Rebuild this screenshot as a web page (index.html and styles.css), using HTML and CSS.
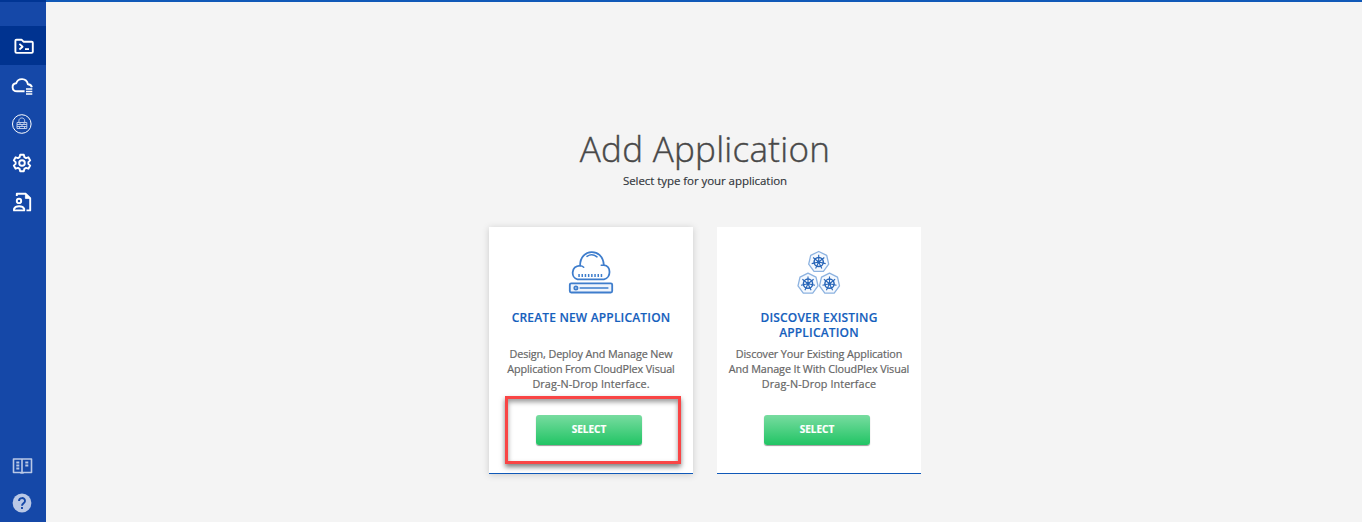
FILE: index.html
```html
<!DOCTYPE html>
<html lang="en">
<head>
<meta charset="utf-8">
<title>Add Application</title>
<link rel="stylesheet" href="styles.css">
</head>
<body>
<div class="app">
  <nav class="sidebar">
    <a class="nav-item active"><svg viewBox="0 26 46 39"><path d="M16.5 39.7h5l2 2h8.2q1.1 0 1.1 1.1v9q0 1.1-1.1 1.1H16.6q-1.2 0-1.2-1.1V40.8q0-1.1 1.1-1.1z"/><path d="M19.4 43.9l3.2 2.8-3.2 2.8M25 49.2h4" stroke-width="1.8"/></svg></a>
    <a class="nav-item"><svg viewBox="0 65 46 39"><path d="M24.6 91.3H17c-5.6 0-5.8-7.6-.8-8 1.8-5.6 10.3-5.7 11.7.9 2 .1 3.6 1.2 4 3"/><path d="M26 89h6.3M26 91.5h6.3M26 94h6.3" stroke-width="1.7"/></svg></a>
    <a class="nav-item"><svg viewBox="0 104 46 39"><circle cx="21.8" cy="124" r="9.3" stroke-width="1"/><g stroke="#c9d6ee"><path d="M18.9 122v-1.2c0-3.8 5.8-3.8 5.8 0v1.2M17 122.5h9.8v6H17zM17 124.5h9.8M17 126.5h9.8M20 122.5v2M24 122.5v2M22 124.5v2M19.6 126.5v2M24.5 126.5v2" stroke-width=".9"/></g></svg></a>
    <a class="nav-item"><svg viewBox="0 143 46 39"><path d="M20.2 154.7h3.6l.6 2.5 1.6.9 2.4-.8 1.8 3.1-1.8 1.7v1.8l1.8 1.7-1.8 3.1-2.4-.8-1.6.9-.6 2.5h-3.6l-.6-2.5-1.6-.9-2.4.8-1.8-3.1 1.8-1.7v-1.8l-1.8-1.7 1.8-3.1 2.4.8 1.6-.9z"/><circle cx="22" cy="163" r="2.8"/></svg></a>
    <a class="nav-item"><svg viewBox="0 182 46 39"><path d="M16.8 196v-2.2h9l4.4 4.4v12.2h-3.7"/><path d="M25.4 193.5v4.9h5z" fill="#fff" stroke-width=".8"/><circle cx="19" cy="200.9" r="2.2"/><path d="M14 210.4v-1.6c1.6-3.3 8.6-3.3 10.2 0v1.6z"/></svg></a>
    <a class="nav-item faded low"><svg viewBox="0 446 46 39"><path d="M13.5 459h8.5v13.5h-8.5zM22 459h9.5v13.5H22zM20.3 473h3.4" stroke-width="1.6"/><path d="M16.3 462.5h3M16.3 465.5h3M16.3 468.5h3M25.3 462.5h3M25.3 465.5h3" stroke-width="1.8"/></svg></a>
    <a class="nav-item faded help"><svg viewBox="0 485 46 37"><circle cx="22" cy="503" r="9.4" fill="#b9c8e6" stroke="none"/><path d="M19 501.1c0-4 6-4 6-.2 0 2.3-3 2.3-3 4.8M22 507.1v2" stroke="#1548a8" stroke-width="1.9"/></svg></a>
  </nav>
  <main class="main">
    <h1 class="title">Add Application</h1>
    <p class="subtitle">Select type for your application</p>
    <div class="cards">
      <section class="card raised">
        <svg class="art" viewBox="568 249 46 46"><g fill="none" stroke="#3e7dcc" stroke-width="1.8"><path d="M577.5 279.3c-6.8-1.5-6.8-13 2.6-13.6-.2-17.6 22.8-18.5 23.7-.6 7.7.7 7.5 12.8.2 14.2z"/><path d="M580 265.7q2.2 0 3.7 1.5M603.6 265.3h-2.4M587 256.4q5-3.4 10 .5" stroke-linecap="round" stroke-width="1.5"/><path d="M578.3 275.5h25" stroke-width="3" stroke-dasharray="1.5 1.7"/><rect x="569.8" y="283.4" width="42.4" height="9.1" rx="1.4" fill="#f0f5fc"/><circle cx="575.9" cy="288" r="1.6"/><path d="M579.6 288h28.8" stroke-width="1.5"/></g></svg>
        <h2 class="name">CREATE NEW APPLICATION</h2>
        <p class="desc">Design, Deploy And Manage New<br>Application From CloudPlex Visual<br><span class="last">Drag-N-Drop Interface.</span></p>
        <button class="select">SELECT</button>
        <div class="highlight"></div>
      </section>
      <section class="card">
        <svg class="art" viewBox="796 249 46 46"><defs><g id="wheel" fill="none"><path d="M0-10.5 8-6.6 10 2.2 4.7 9.4H-4.7L-10 2.2-8-6.6z" fill="#f5f9fe" stroke="#8cb2e0" stroke-width="1.3" stroke-linejoin="round"/><circle r="4.6" stroke="#2765b8" stroke-width="1.5"/><path d="M0 0V-7.2M0 0 5.6-4.5M0 0 7 1.6M0 0 3.1 6.5M0 0-3.1 6.5M0 0-7 1.6M0 0-5.6-4.5" stroke="#2765b8" stroke-width="1.1"/><circle r="1.5" fill="#2765b8"/></g></defs><use href="#wheel" x="818.7" y="262"/><use href="#wheel" x="808" y="283.7"/><use href="#wheel" x="829.5" y="283.7"/></svg>
        <h2 class="name">DISCOVER EXISTING<br>APPLICATION</h2>
        <p class="desc">Discover Your Existing Application<br>And Manage It With CloudPlex Visual<br><span class="last">Drag-N-Drop Interface</span></p>
        <button class="select">SELECT</button>
      </section>
    </div>
  </main>
</div>
</body>
</html>
```
FILE: styles.css
```css
* { box-sizing: border-box; }
body { margin: 0; background: #f4f4f4; font-family: "Open Sans", "Noto Sans", sans-serif; overflow: hidden; }
.app { display: flex; height: 522px; }
.sidebar { width: 46px; flex: none; display: flex; flex-direction: column; padding-top: 24px; background: #1548a8; border-top: 2px solid #003594; }
.nav-item { display: block; height: 39px; flex: none; }
.nav-item svg { display: block; width: 46px; height: 100%; fill: none; stroke: #fff; stroke-width: 1.9; stroke-linejoin: round; }
.nav-item.active { background: #003390; }
.nav-item.faded svg { stroke: #b9c8e6; }
.nav-item.low { margin-top: auto; }
.nav-item.help { height: 37px; }
.main { flex: 1; border-top: 2px solid #1059b8; display: flex; flex-direction: column; align-items: center; padding-top: 123px; padding-left: 2px; }
.title { margin: 0; font-size: 35px; line-height: 48px; font-weight: 300; letter-spacing: .27px; color: #484848; -webkit-text-stroke: .4px #484848; white-space: nowrap; }
.subtitle { margin: 0; font-size: 11.5px; line-height: 16px; letter-spacing: -.06px; color: #30343a; -webkit-text-stroke: .15px #30343a; white-space: nowrap; }
.cards { display: flex; gap: 24px; margin-top: 38px; }
.card { position: relative; width: 204px; height: 247px; background: #fff; border-bottom: 1px solid #1059b8; display: flex; flex-direction: column; align-items: center; padding-top: 22px; text-align: center; white-space: nowrap; }
.raised { box-shadow: 0 1px 7px rgba(0,0,0,.17); }
.art { width: 46px; height: 46px; flex: none; }
.name { margin: 15px 0 0; height: 36px; font-size: 12px; line-height: 15px; letter-spacing: .18px; font-weight: 600; color: #1560bd; -webkit-text-stroke: .15px #1560bd; }
.desc { margin: 0; font-size: 10.8px; line-height: 15px; letter-spacing: -.11px; color: #666; -webkit-text-stroke: .2px #666; }
.last { letter-spacing: .1px; }
.select { margin: 24px 4px 0 0; width: 106px; height: 30px; padding: 0 0 2px; border: 0; border-radius: 3px; background: linear-gradient(#78dca0, #21c464); box-shadow: 0 1px 1px rgba(0,0,0,.4); color: #fff; font: 700 10px/28px "Open Sans", sans-serif; -webkit-text-stroke: .2px #fff; }
.highlight { position: absolute; left: 16px; top: 169px; width: 176px; height: 68px; border: 3px solid #f94545; box-shadow: 0 3px 5px rgba(0,0,0,.5), inset 0 3px 5px rgba(0,0,0,.4); }
```
